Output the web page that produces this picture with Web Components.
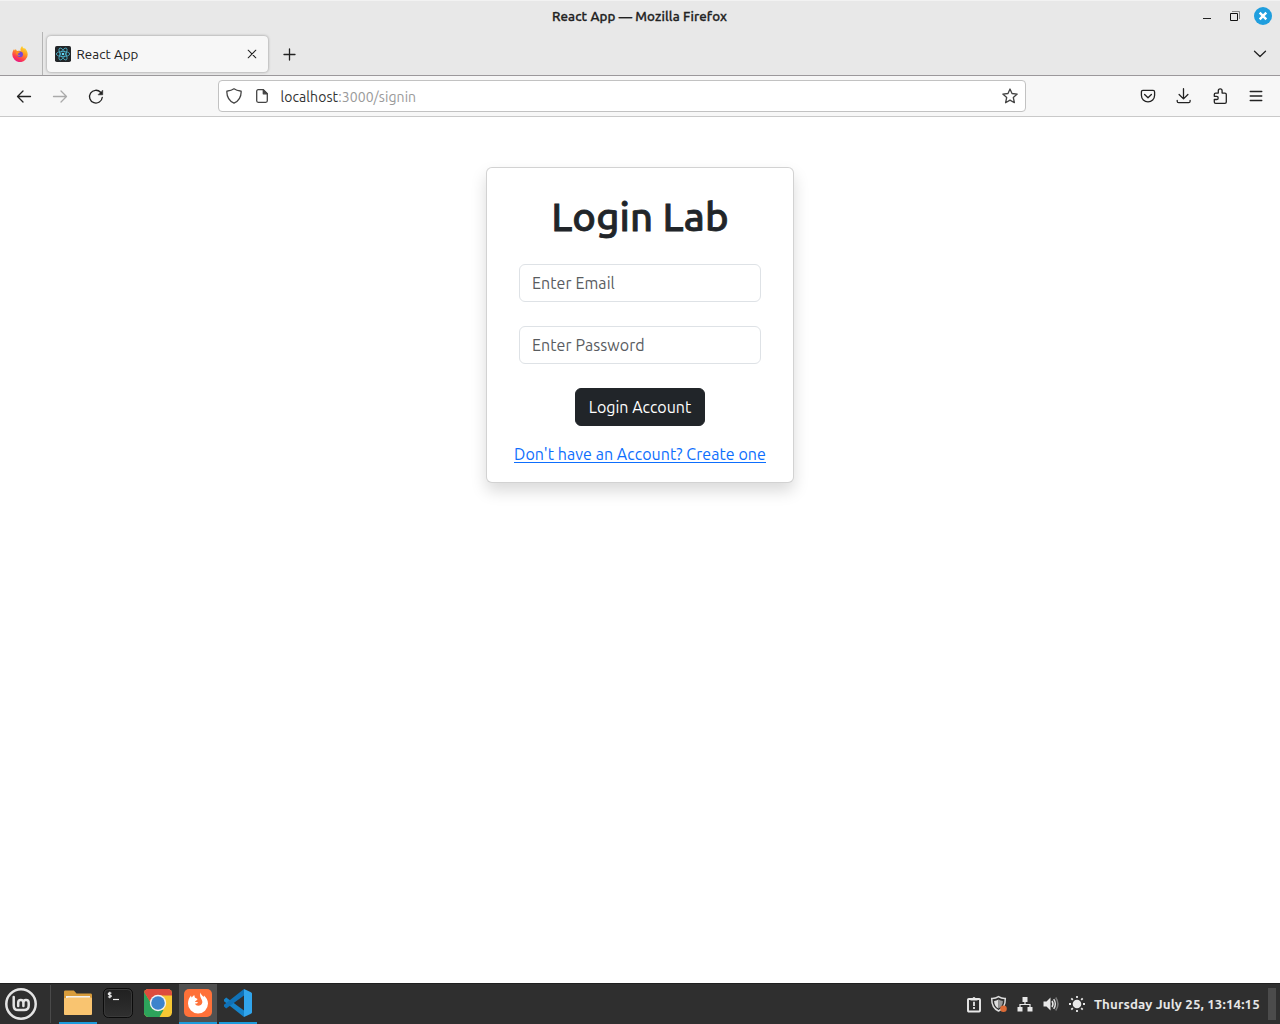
<!DOCTYPE html>
<html lang="en">
<head>
<meta charset="utf-8">
<title>React App</title>
<style>
html,body{margin:0;height:100%;overflow:hidden;background:#fff}
body{font-family:Ubuntu,"Noto Sans","Open Sans",sans-serif}
</style>
</head>
<body>
<desktop-screen></desktop-screen>
<script>
const define=(name,html,after)=>customElements.define(name,class extends HTMLElement{
  constructor(){super();this.attachShadow({mode:'open'}).innerHTML=html;}
  connectedCallback(){if(after)after(this);}
});

const S=(w,h,body,extra='')=>`<svg width="${w}" height="${h}" viewBox="0 0 ${w} ${h}" fill="none" ${extra}>${body}</svg>`;
const line='stroke="currentColor" stroke-width="1.3" stroke-linecap="round" stroke-linejoin="round"';
const ICONS={
 back:S(16,16,'<path d="M14.5 8.5H1.5M7 3 1.5 8.500 7 14"/>',line),
 forward:S(16,16,'<path d="M1.5 8.500h13M9 3 14.5 8.500 9 14"/>',line),
 reload:S(16,17,'<path d="M14.300 9.300A6.400 6.400 0 1 1 12.600 4.300L13.400 5"/><path d="M14.700 2.500v4.300h-4.300z" fill="currentColor" stroke-width=".6"/>',line),
 shield:S(16,16,'<path d="M8 .8C6.2 2.1 3.8 2.8 1.5 3c-.4 0-.7.3-.7.8C.9 9.300 3.500 13.200 8 15.200c4.500-2 7.100-5.900 7.200-11.400 0-.5-.3-.8-.7-.8C12.200 2.800 9.800 2.100 8 .8z"/>',line),
 page:S(16,16,'<path d="M9.300 1.700H4.200c-.9 0-1.500.6-1.500 1.500v9.600c0 .9.6 1.500 1.500 1.500h7.600c.9 0 1.500-.6 1.500-1.500V5.700z"/><path d="M9.300 2v3.800h3.800z" fill="currentColor"/>',line),
 star:S(16,16,'<path d="M8 1.000 10.000 5.500 15.200 6.100 11.300 9.500 12.400 14.700 8 12.100 3.600 14.700 4.700 9.500 .8 6.100 6 5.500z"/>',line),
 pocket:S(16,16,'<path d="M2.900 2.400h10.200c.9 0 1.500.6 1.500 1.500v3.400c0 3.700-2.900 6.500-6.600 6.500S1.400 11 1.400 7.300V3.900c0-.9.6-1.500 1.500-1.500z"/><path d="M4.600 6.500 8 9.800l3.400-3.300"/>',line),
 download:S(16,16,'<path d="M7.500 .7v10M3.100 6.500 7.500 10.900l4.400-4.400M1.200 12.300v.9c0 .9.700 1.500 1.500 1.500h9.900c.9 0 1.500-.7 1.500-1.500v-.9"/>',line),
 puzzle:S(16,16,'<path d="M3.700 15.300c-.8 0-1.400-.6-1.400-1.400v-2.400h2.300a1.600 1.600 0 0 0 0-3.200H2.300V6.500c0-.8.6-1.400 1.400-1.400h2.600V2.700a1.900 1.900 0 0 1 3.800 0v2.400h2.800c.8 0 1.400.6 1.400 1.400v7.400c0 .8-.6 1.400-1.400 1.400z"/>',line),
 menu:S(16,16,'<path d="M2.200 3.500h11.600M2.200 8h11.600M2.200 12.500h11.600"/>',line),
 close:S(16,16,'<path d="m4.200 4.200 7.600 7.600M11.800 4.200l-7.600 7.600" stroke-width="1.050"/>',line),
 plus:S(16,16,'<path d="M7.500 3v11M2 8.500h11"/>',line),
 chevron:S(16,16,'<path d="m2.500 5.200 5.500 5.300 5.500-5.300"/>',line),
 minimize:S(12,12,'<path d="M2 8.500h8" stroke="#222"/>'),
 restore:S(12,12,'<path d="M3 1.500h7.500v7.500" stroke="#888"/><path d="M1.500 3.500h7v7h-7z" stroke="#111"/>'),
 winclose:S(18,18,'<circle cx="9" cy="9" r="9" fill="#1f9ede"/><path d="m5.700 5.700 6.600 6.600m0-6.600-6.600 6.600" stroke="#fff" stroke-width="2.400"/>'),
 firefox:S(16,16,`<defs><linearGradient id="a" x1=".8" y1="0" x2=".3" y2="1"><stop stop-color="#ffe736"/><stop offset=".4" stop-color="#ff9a1f"/><stop offset=".75" stop-color="#ff3c4d"/><stop offset="1" stop-color="#e2158c"/></linearGradient></defs>
 <path d="M10.200 0c.3 1.300 1.300 2.200 2.200 2.900 0-.5 0-.8-.1-1.200 2 1.500 3.400 4 3.400 6.700A7.700 7.700 0 0 1 .3 8.400C.3 6 1.300 3.900 2.100 3l.4 1.500C3 3.800 3.500 3.400 4 3c.1 1 .5 1.600 1.500 2 1.100-.3 2.800-.1 3.300.2C8 3.500 8.600 1.500 10.200 0z" fill="url(#a)"/><circle cx="8.100" cy="8.300" r="2.900" fill="#7544d8"/><path d="M3.800 6c1.400-.8 3-.6 4.200.4-.7.900-1.700.7-2.500 1.300.3 1.100 1.400 1.600 3 1.100-1 1.700-4.300 1.200-4.700-2.800z" fill="#ff901e"/>`),
 react:S(16,16,'<rect width="16" height="16" rx="1.800" fill="#222528"/><g stroke="#4eb5cf" stroke-width=".8"><ellipse cx="8" cy="8" rx="6.700" ry="2.600"/><ellipse cx="8" cy="8" rx="6.700" ry="2.600" transform="rotate(60 8 8)"/><ellipse cx="8" cy="8" rx="6.700" ry="2.600" transform="rotate(120 8 8)"/></g><circle cx="8" cy="8" r="1.300" fill="#61dafb"/>'),
 mint:S(32,32,'<g stroke="#e4e4e4" stroke-linecap="round" stroke-linejoin="round"><circle cx="16" cy="16" r="14.700" stroke-width="2.500"/><path d="M8.700 9v8.500c0 3 1.700 4.600 4.500 4.600h6c2.900 0 4.500-1.600 4.500-4.500v-2.900c0-1.600-1.200-2.700-2.700-2.700s-2.600 1.100-2.600 2.700v3.200m0-3.200c0-1.600-1.100-2.700-2.600-2.700s-2.600 1.100-2.600 2.700v3.200" stroke-width="2.500"/></g>'),
 folder:S(30,28,'<path d="M1 3c0-1 .4-1.500 1.400-1.500h7.500c1 0 1.500.5 2.100 1.200l1.500 1.800h14c1 0 1.500.6 1.500 1.500v8H1z" fill="#d89c3b"/><path d="M3 7h24v5H3z" fill="#f3f1ed"/><path d="M1 9.200c1.500 0 3-.1 4.500-.7h22c1 0 1.500.3 1.500 1.200v15.100c0 .8-.5 1.200-1.200 1.200H2.200C1.400 26 1 25.600 1 24.800z" fill="#f9c470"/>'),
 terminal:S(30,30,'<defs><linearGradient id="b" x2="0" y2="1"><stop stop-color="#202020"/><stop offset="1" stop-color="#303030"/></linearGradient></defs><rect x=".5" y=".5" width="29" height="29" rx="5" fill="url(#b)" stroke="#0b0b0b"/><rect x="1.500" y="1.500" width="27" height="27" rx="4" stroke="#3a3a3a"/><path d="M10 11.500h6" stroke="#eee" stroke-width="1.200"/><g stroke="#eee" stroke-width="1.100"><path d="M8.400 5.300c-.8-.7-3.200-.6-3.200.6 0 1.400 3.200.7 3.200 2.200 0 1.200-2.400 1.300-3.400.5M6.800 3.800v6.500"/></g>'),
 chrome:S(30,30,'<defs><clipPath id="c"><rect x="1" y="1" width="28" height="28" rx="4.500"/></clipPath></defs><g clip-path="url(#c)"><path d="M0 0h30v30H0z" fill="#f6c733"/><path d="M1 3 9.500 18 15 22h5.500L16 30H0V0z" fill="#2da45b"/><path d="M1 0h29v7.500H15c-4 0-6.500 4-6.500 8.500L1 4z" fill="#dd4c3d"/></g><circle cx="15" cy="15" r="8.200" fill="#f3f3f3"/><circle cx="15" cy="15" r="6.800" fill="#3d83cc"/>'),
 fox:S(30,30,'<rect x="1" y="1" width="28" height="28" rx="5" fill="#ff7139"/><path d="M17.500 4.500c.2 2 1.900 3.100 3.200 4.500l.3-1.400c2.300 2 4 4.700 4 8A10 10 0 0 1 5 15.500c0-3.300 1.200-6 3-8L8.500 9.600 11.200 7l.8 2.700c1.300.4 2 .9 2.600 1.400-.3 1.400-2.100 1.700-2.600 2.800 1 .1 2.200-.2 3.100.7-.5 1-2 1.100-3.100 1.200 1.200 3 6.600 2.500 7.300-1.300.5-3.300-3.500-5.200-1.800-10z" fill="#fff"/>'),
 vscode:S(30,30,'<path d="M1 11.600 3.200 9.600 21 22.500V29L1 13.300z" fill="#1683c9"/><path d="M1 18.400 3.200 20.400 21 7.500V1L1 16.700z" fill="#1072b8"/><path d="m21 1 6.500 3c1 .5 1.500 1 1.500 2v18c0 1-.5 1.500-1.500 2L21 29z" fill="#31a5ec"/>'),
 report:S(16,18,'<rect x="2" y="4" width="12" height="12.500" rx=".8" stroke="#e8e8e8" stroke-width="1.900"/><path d="M4.500 3.500h2a1.500 1.500 0 1 1 3 0h2v2h-7z" fill="#e8e8e8"/><path d="M8 6.800v4.200M8 12v2" stroke="#e8e8e8" stroke-width="1.800"/>'),
 guard:S(18,18,'<path d="M8.500 1.700c-2.200 1.500-4.500 2-6.800 1.900C1.600 9.800 3.700 14 8.500 16c4.800-2 6.900-6.200 6.800-12.400-2.300.1-4.600-.4-6.800-1.900z" stroke="#ddd" stroke-width="1.500"/><path d="M8.500 4.500v9c-3-1.500-4.300-4-4.400-7.500 1.500-.1 3-.6 4.400-1.500z" fill="#ddd"/><path d="M8.500 4.500c1.400.9 2.900 1.400 4.400 1.500-.1 3.500-1.400 6-4.400 7.500z" fill="#999"/><circle cx="13.500" cy="13.700" r="3.300" fill="#dc6b36"/>'),
 network:S(16,16,'<path d="M5.500 1h5v5h-5zM.5 11h5v4.500h-5zM10.500 11h5v4.500h-5z" fill="#e8e8e8"/><path d="M8 6v2.500M3 11.500v-3h10v3" stroke="#e8e8e8" stroke-width="1.200"/>'),
 sound:S(16,16,'<path d="M.5 5.500h3l4-4v13l-4-4h-3z" fill="#e8e8e8"/><path d="M9 5q2 3 0 6" stroke="#e8e8e8" stroke-width="1.500"/><path d="M10.700 3.200q3.300 4.800 0 9.600" stroke="#ddd" stroke-width="1.500"/><path d="M12.700 1.500q4.500 6.500 0 13" stroke="#777" stroke-width="1.500"/>'),
 sun:S(16,16,'<circle cx="8" cy="8" r="4.300" fill="#e8e8e8"/><path d="M8 0v2M8 14v2M0 8h2M14 8h2M2.300 2.300l1.500 1.500M12.200 12.200l1.500 1.500M13.700 2.300l-1.500 1.500M3.800 12.200l-1.500 1.500" stroke="#e8e8e8" stroke-width="1.800"/>')
};
define('ui-icon','<style>:host{display:flex;align-items:center;justify-content:center;flex:none}svg{display:block}</style>',el=>{
  el.shadowRoot.innerHTML+=ICONS[el.getAttribute('name')];
});

define('window-title',`<style>
:host{display:grid;grid-template-columns:1fr auto 1fr;height:32px;box-sizing:border-box;border-top:1px solid #f2f2f2;align-items:center;background:#e8e8e8;color:#222;font-size:13.333px;font-weight:500;line-height:31px;letter-spacing:.11px}
.t{grid-column:2;-webkit-text-stroke:.3px #222;margin-right:1px}nav{display:flex;justify-content:flex-end;align-items:center;padding:0 8px 1px 0}
ui-icon[name=restore]{margin:0 13px 0 16px}
</style><span class="t"><slot></slot></span><nav><ui-icon name="minimize"></ui-icon><ui-icon name="restore"></ui-icon><ui-icon name="winclose"></ui-icon></nav>`);

define('tab-strip',`<style>
:host{display:flex;height:44px;box-sizing:border-box;border-bottom:1px solid #9b989b;background:#e8e8e8;align-items:stretch;color:#222}
.pin{padding-right:2px;box-sizing:border-box;border-right:1px solid #b4b4b4;width:43px}
.tab{display:flex;align-items:center;width:221px;height:36px;box-sizing:border-box;margin:4px 0 0 4px;padding:0 8px;border-radius:4px;background:#f7f7f7;box-shadow:0 0 3px rgba(0,0,0,.4);font-size:13.333px;letter-spacing:.08px}
.label{margin-left:5.500px}.x{margin-left:auto}.plus{margin-left:14px;height:44px}.down{margin:0 12px 0 auto}
</style><ui-icon class="pin" name="firefox"></ui-icon><div class="tab"><ui-icon name="react"></ui-icon><span class="label"><slot></slot></span><ui-icon class="x" name="close"></ui-icon></div><ui-icon class="plus" name="plus"></ui-icon><ui-icon class="down" name="chevron"></ui-icon>`);

define('url-field',`<style>
:host{display:flex;box-sizing:border-box;width:808px;height:32px;border:1px solid #c2c2c2;border-radius:4px;background:#fff;align-items:center;padding:0 1px;font-size:14px;letter-spacing:.08px;color:#333}
ui-icon{width:28px;color:#444}.u{margin:1px 0 0 4.500px}.p{color:#999}ui-icon:last-child{margin-left:auto}
</style><ui-icon name="shield"></ui-icon><ui-icon name="page"></ui-icon><span class="u">localhost<span class="p">:3000/signin</span></span><ui-icon name="star"></ui-icon>`);

define('nav-bar',`<style>
:host{display:flex;height:41px;box-sizing:border-box;border-bottom:1px solid #c9c9c9;background:#f7f7f7;align-items:center;padding:0 6px;gap:104px;color:#222}
div{display:flex}ui-icon{width:36px}.off{color:#aaa}
</style><div><ui-icon name="back"></ui-icon><ui-icon class="off" name="forward"></ui-icon><ui-icon name="reload"></ui-icon></div><url-field></url-field><div><ui-icon name="pocket"></ui-icon><ui-icon name="download"></ui-icon><ui-icon name="puzzle"></ui-icon><ui-icon name="menu"></ui-icon></div>`);

define('text-field',`<style>
:host{display:flex;align-items:center;box-sizing:border-box;width:242px;height:38px;padding:0 12px;border:1px solid #dee2e6;border-radius:6px;color:#595c5f;letter-spacing:.08px}
</style><slot></slot>`);

define('login-card',`<style>
:host{display:flex;flex-direction:column;align-items:center;box-sizing:border-box;width:308px;height:316px;border:1px solid rgba(0,0,0,.175);border-radius:6px;background:#fff;box-shadow:0 8px 16px rgba(0,0,0,.15);padding-top:25px;font-size:16px;line-height:24px;color:#212529}
h1{margin:0 0 23px;font-size:40px;font-weight:500;line-height:48px;letter-spacing:.1px;-webkit-text-stroke:.8px #212529}
text-field{margin-bottom:24px}
button{box-sizing:border-box;width:130px;height:38px;border:1px solid #212529;border-radius:6px;background:#212529;color:#fff;font:inherit;padding:0 12px;margin-bottom:16px}
a{display:block;height:21px;box-sizing:border-box;border-bottom:1px solid #0d6efd;color:#0d6efd;line-height:24px;letter-spacing:.06px;text-decoration:none}
</style><h1>Login Lab</h1>
<text-field role="textbox">Enter Email</text-field>
<text-field role="textbox">Enter Password</text-field>
<button>Login Account</button>
<a>Don't have an Account? Create one</a>`);

define('task-button',`<style>
:host{display:flex;width:38px;height:40px;box-sizing:border-box;align-items:center;justify-content:center;border-bottom:2px solid transparent}
:host([open]){border-color:#1c9bdc}:host([active]){background:#515151}
</style><slot></slot>`);

define('task-bar',`<style>
:host{display:flex;height:41px;box-sizing:border-box;border-top:1px solid #1f1f1f;background:#2f2f2f;align-items:center;color:#e6e6e6}
.mint{margin-left:5px}.sep{width:1px;height:38px;background:#4a4a4a;margin:0 8px 0 13px}
.apps{display:flex;gap:2px}.tray{display:flex;margin-left:auto}
.clock{font-size:13.333px;font-weight:700;letter-spacing:.12px;width:166px;white-space:nowrap;margin:0 8px 0 3px}.desk{width:8px;height:32px;background:#4b4b4b;margin-right:4px}
</style><ui-icon class="mint" name="mint"></ui-icon><i class="sep"></i>
<div class="apps"><task-button open><ui-icon name="folder"></ui-icon></task-button><task-button><ui-icon name="terminal"></ui-icon></task-button><task-button><ui-icon name="chrome"></ui-icon></task-button><task-button open active><ui-icon name="fox"></ui-icon></task-button><task-button open><ui-icon name="vscode"></ui-icon></task-button></div>
<div class="tray"><ui-icon name="report" style="width:26px"></ui-icon><ui-icon name="guard" style="width:24px"></ui-icon><ui-icon name="network" style="width:27px"></ui-icon><ui-icon name="sound" style="width:25px"></ui-icon><ui-icon name="sun" style="width:28px"></ui-icon></div>
<span class="clock">Thursday July 25, 13:14:15</span><i class="desk"></i>`);

define('desktop-screen',`<style>
:host{display:flex;flex-direction:column;height:1024px;width:1280px}
main{flex:1;display:flex;justify-content:center;align-items:flex-start;padding-top:50px;background:#fff}
</style><window-title>React App — Mozilla Firefox</window-title><tab-strip>React App</tab-strip><nav-bar></nav-bar><main><login-card></login-card></main><task-bar></task-bar>`);
</script>
</body>
</html>
